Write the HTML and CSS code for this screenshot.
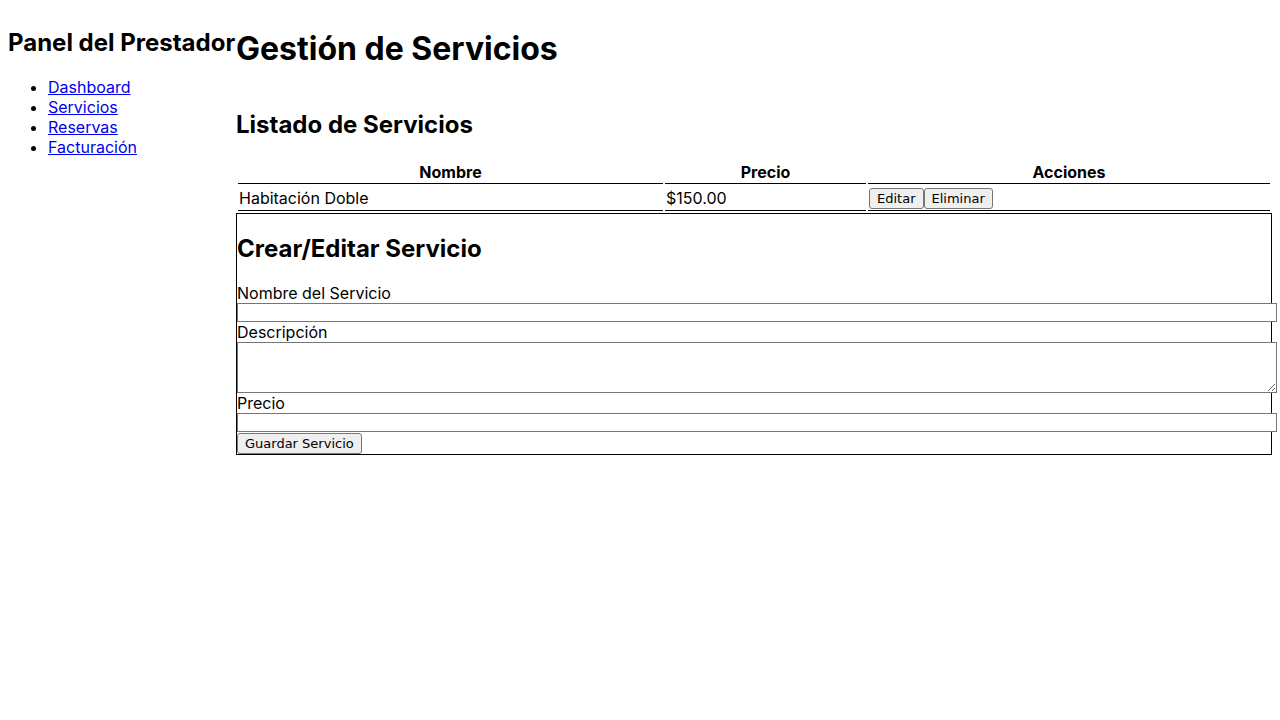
FILE: index.html
```html
<!DOCTYPE html>
<html lang="es">
<head>
<meta charset="utf-8">
<title>Panel del Prestador</title>
<link rel="stylesheet" href="styles.css">
</head>
<body>
<aside class="sidebar">
  <h2>Panel del Prestador</h2>
  <ul>
    <li><a href="#">Dashboard</a></li>
    <li><a href="#">Servicios</a></li>
    <li><a href="#">Reservas</a></li>
    <li><a href="#">Facturación</a></li>
  </ul>
</aside>
<main class="main">
  <h1>Gestión de Servicios</h1>
  <section class="listado">
    <h2>Listado de Servicios</h2>
    <table class="tabla">
      <thead>
        <tr><th class="col-nombre">Nombre</th><th class="col-precio">Precio</th><th class="col-acciones">Acciones</th></tr>
      </thead>
      <tbody>
        <tr>
          <td>Habitación Doble</td>
          <td>$150.00</td>
          <td><button class="btn">Editar</button><button class="btn">Eliminar</button></td>
        </tr>
      </tbody>
    </table>
  </section>
  <form class="form">
    <h2>Crear/Editar Servicio</h2>
    <label for="nombre">Nombre del Servicio</label>
    <div class="control"><input class="field" id="nombre" type="text"></div>
    <label for="desc">Descripción</label>
    <div class="control"><textarea class="area" id="desc" rows="3"></textarea></div>
    <label for="precio">Precio</label>
    <div class="control"><input class="field" id="precio" type="text"></div>
    <button class="btn" type="button">Guardar Servicio</button>
  </form>
</main>
</body>
</html>
```
FILE: styles.css
```css
html {
  overflow: visible;
}
body {
  margin: 8px 0 8px 8px;
  display: flex;
  overflow: visible;
  font-family: Inter, "Liberation Sans", sans-serif;
  color: #000;
  background: #fff;
}
.sidebar {
  flex: none;
  width: 228px;
  white-space: nowrap;
}
.main {
  flex: 1;
  min-width: 0;
  padding-right: 8px;
  overflow: visible;
  display: flex;
  flex-direction: column;
}
.tabla {
  width: 100%;
  border-spacing: 2px;
}
.tabla th,
.tabla td {
  border-bottom: 1px solid #000;
  text-align: left;
  padding: 1px;
}
.tabla th {
  text-align: center;
}
.col-nombre { width: 423px; }
.col-precio { width: 199px; }
.col-acciones { width: 400px; }
.btn {
  font: 13px "DejaVu Sans", sans-serif;
  line-height: normal;
  color: #000;
  background: #efefef;
  border: 1px solid #767676;
  border-radius: 3px;
  padding: 2px 7px;
  margin: 0;
}
.form {
  border: 1px solid #000;
  overflow: visible;
}
.form label {
  display: block;
}
.control {
  margin-right: -6px;
}
.field {
  display: block;
  box-sizing: border-box;
  width: 100%;
  margin: 0;
  padding: 1px 2px;
  border: 1px solid #767676;
  border-radius: 0;
  font: 13.333px "DejaVu Sans", sans-serif;
  line-height: normal;
  background: #fff;
}
.area {
  display: block;
  box-sizing: border-box;
  width: 100%;
  margin: 0;
  padding: 2px;
  border: 1px solid #767676;
  border-radius: 0;
  font: 13.333px "DejaVu Sans Mono", monospace;
  line-height: normal;
  background: #fff;
}
```
